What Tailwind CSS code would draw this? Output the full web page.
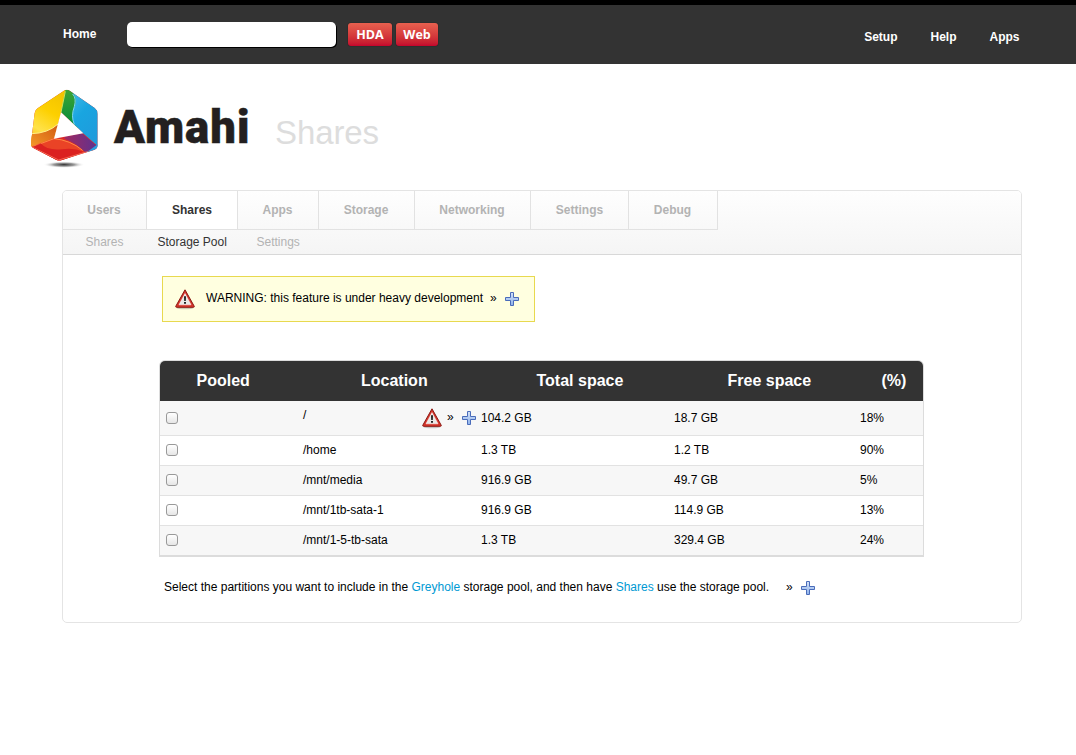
<!DOCTYPE html>
<html lang="en">
<head>
<meta charset="utf-8">
<title>Amahi - Shares</title>
<script src="https://cdn.jsdelivr.net/npm/@tailwindcss/browser@4"></script>
</head>
<body class="bg-white text-black text-[12px] leading-[16px] font-['Liberation_Sans',Arial,sans-serif]">

<svg class="absolute size-0">
  <defs>
    <linearGradient id="plusFill" x1="0" y1="0" x2="0" y2="1"><stop offset="0" stop-color="#d3e2f8"/><stop offset="1" stop-color="#8fb2ea"/></linearGradient>
    <symbol id="warn" viewBox="0 0 22 22">
      <ellipse cx="11" cy="20" rx="8.5" ry="1.3" fill="#000" opacity=".2"/>
      <path d="M11 1.8 L20.2 18.2 Q20.6 19.3 19.4 19.3 H2.6 Q1.4 19.3 1.8 18.2 Z" fill="#d5352b" stroke="#8a1a14" stroke-width="1" stroke-linejoin="round"/>
      <path d="M11 5.6 L17 16.8 H5 Z" fill="#e9e9e7" stroke="#fff" stroke-width=".5"/>
      <path d="M10 8.2 H12 L11.8 13 H10.2 Z M10 14 H12 V15.8 H10 Z" fill="#222"/>
    </symbol>
    <symbol id="plus" viewBox="0 0 14 14">
      <path d="M5.5 .5 H8.5 V5.5 H13.5 V8.5 H8.5 V13.5 H5.5 V8.5 H.5 V5.5 H5.5 Z" fill="url(#plusFill)" stroke="#4a6cba" stroke-width="1"/>
    </symbol>
  </defs>
</svg>

<header class="flex h-[64px] items-start border-t-[5px] border-black bg-[#333] pl-[63px] pr-[56.5px] font-bold text-white">
  <a class="mt-[21px] w-[64px]">Home</a>
  <div class="mt-[17px] h-[25px] w-[209px] rounded-[5px] bg-white shadow-[1px_1px_0_#000]"></div>
  <div class="mt-[18px] ml-[12px] flex gap-1 font-['Open_Sans',sans-serif] text-[12.5px] leading-[23px] text-shadow-[0_1px_1px_#0006]">
    <button class="h-[23px] w-[44px] rounded-[3px] bg-linear-to-b from-[#e8604f] to-[#c4032c] shadow-[0_0_1px_#000]">HDA</button>
    <button class="h-[23px] w-[42px] rounded-[3px] bg-linear-to-b from-[#e8604f] to-[#c4032c] shadow-[0_0_1px_#000]">Web</button>
  </div>
  <nav class="mt-[24px] ml-auto flex gap-[33px]"><a>Setup</a><a>Help</a><a>Apps</a></nav>
</header>

<div class="flex h-[126px] items-start pl-[28px] pt-[24px]">
  <svg class="h-[82px] w-[72px] shrink-0" viewBox="24 24 216 246">
    <defs>
      <linearGradient id="yel" x1=".6" y1="0" x2=".2" y2="1"><stop offset="0" stop-color="#f3c400"/><stop offset=".35" stop-color="#fdd000"/><stop offset=".7" stop-color="#ffe24a"/><stop offset="1" stop-color="#f9b000"/></linearGradient>
      <linearGradient id="ora" x1="0" y1="1" x2="1" y2="0"><stop offset="0" stop-color="#f59a2a"/><stop offset="1" stop-color="#d05a10"/></linearGradient>
      <linearGradient id="blu" x1="0" y1="0" x2=".6" y2="1"><stop offset="0" stop-color="#4dbfe8"/><stop offset=".5" stop-color="#19a5e0"/><stop offset="1" stop-color="#1f9bdc"/></linearGradient>
      <linearGradient id="grn" x1="0" y1="0" x2="0" y2="1"><stop offset="0" stop-color="#3fa535"/><stop offset="1" stop-color="#008a3a"/></linearGradient>
      <linearGradient id="pur" x1="0" y1="0" x2="1" y2="0"><stop offset="0" stop-color="#a02a62"/><stop offset="1" stop-color="#5b3291"/></linearGradient>
      <radialGradient id="shade"><stop offset="0" stop-color="#333"/><stop offset=".5" stop-color="#777" stop-opacity=".75"/><stop offset="1" stop-color="#fff" stop-opacity="0"/></radialGradient>
      <clipPath id="cube"><path d="M132 32 Q140 27 149 32 L224 84 Q233 91 233 102 V198 Q232 206 224 209 L124 241 Q116 243 108 239 L39 203 Q32 198 33 188 L44 99 Q45 90 53 85 Z"/></clipPath>
    </defs>
    <ellipse cx="132" cy="254" rx="62" ry="10" fill="url(#shade)"/>
    <g clip-path="url(#cube)">
      <rect x="24" y="24" width="216" height="246" fill="#da2a2a"/>
      <path d="M139 24 L24 90 V205 L102 176 L124 97 L140 34 Z" fill="url(#yel)"/>
      <path d="M34 161 Q84 160 114 132 L102 176 L30 202 Z" fill="url(#ora)"/>
      <path d="M34 161 Q84 160 114 132" fill="none" stroke="#ffee8a" stroke-width="3"/>
      <path d="M136 30 L123 97 L175 146 L180 60 L147 26 Z" fill="url(#grn)"/>
      <path d="M136 34 L123 97" stroke="#cde05a" stroke-width="3"/>
      <path d="M142 24 Q176 48 164 78 Q152 110 163 133 L189 160 L240 204 V80 Z" fill="url(#blu)"/>
      <path d="M163 133 Q152 108 163 80 Q170 55 158 42" fill="none" stroke="#7fd4f4" stroke-width="3"/>
      <path d="M30 201 L102 174 Q160 182 196 216 L116 246 Z" fill="#ea4326"/>
      <path d="M40 199 L102 176 Q150 180 188 211" fill="none" stroke="#ff8a45" stroke-width="3"/>
      <path d="M134 170 L186 160 L236 203 L196 217 Q170 190 134 176 Z" fill="url(#pur)"/>
      <path d="M62 190 Q80 212 125 208 Q160 202 192 215 L116 246 L30 205 Z" fill="#d4131e" opacity=".7"/>
      <path d="M36 201 L116 240 L230 207" fill="none" stroke="#f36a55" stroke-width="3"/>
      <path d="M198 218 L234 208 V192 Z" fill="#2b9ee0"/>
      <path d="M123 97 L190 160 L102 176 Z" fill="#fff"/>
    </g>
  </svg>
  <div class="ml-[14px] w-[161px] pt-[10px] font-['Roboto','Open_Sans',sans-serif] text-[45.5px] leading-[60px] font-black tracking-[1px] text-[#231f20] [-webkit-text-stroke:0.5px_#231f20]">Amahi</div>
  <h1 class="pt-[26px] text-[33px] leading-[38px] tracking-[-0.1px] text-[#ddd]">Shares</h1>
</div>

<main class="ml-[62px] h-[433px] w-[960px] rounded-[5px] border border-[#e4e4e4]">
  <div class="h-[64px] rounded-t-[4px] border-b border-[#d8d8d8] bg-linear-to-b from-[#fefefe] to-[#f5f5f5]">
    <nav class="flex h-[39px] w-[655px] border-r border-b border-[#e2e2e2] text-center leading-[38px] font-bold text-[#b3b3b3]">
      <a class="w-[83px] pr-px">Users</a>
      <a class="w-[92px] border-x border-[#e2e2e2] bg-white text-[#333]">Shares</a>
      <a class="w-[80px] pr-px">Apps</a>
      <a class="w-[96px] border-l border-[#e2e2e2] pr-px">Storage</a>
      <a class="w-[116px] border-l border-[#e2e2e2] pr-px">Networking</a>
      <a class="w-[98px] border-l border-[#e2e2e2]">Settings</a>
      <a class="w-[89px] border-l border-[#e2e2e2] pr-px">Debug</a>
    </nav>
    <nav class="flex pl-[22.5px] leading-[24px] text-[#b3b3b3]">
      <a class="w-[72px]">Shares</a><a class="w-[99px] text-[#333]">Storage Pool</a><a>Settings</a>
    </nav>
  </div>

  <div class="mt-[21px] ml-[99px] flex h-[46px] w-[373px] items-center border border-[#e8d94f] bg-[#ffffe0] pl-[11px]">
    <svg class="size-[22px]"><use href="#warn"/></svg>
    <span class="-mt-[2px] ml-[10px] w-[284px] whitespace-nowrap">WARNING: this feature is under heavy development</span>
    <span class="-mt-[2px] w-[15px]">»</span>
    <svg class="size-[14px]"><use href="#plus"/></svg>
  </div>

  <div class="mt-[38px] ml-[96px] w-[765px] rounded-t-[6px] border border-b-2 border-[#dcdcdc]">
    <div class="grid h-[40px] grid-cols-[143px_178px_193px_186px_63px] rounded-t-[5px] bg-[#333] text-[16px] leading-[39px] font-bold text-white">
      <div class="pl-[36.5px]">Pooled</div><div class="pl-[58px]">Location</div><div class="pl-[55.5px]">Total space</div><div class="pl-[53.5px]">Free space</div><div class="pl-[21.5px]">(%)</div>
    </div>
    <div class="grid h-[35px] grid-cols-[143px_178px_193px_186px_63px] items-center border-b border-[#e2e2e2] bg-[#f7f7f7]">
      <div class="pl-[6px]"><div class="size-[12px] rounded-[3px] border border-[#999] bg-linear-to-b from-white to-[#e6e6e6]"></div></div>
      <div class="flex items-center"><span class="-mt-[6px] w-[118px]">/</span><svg class="size-[22px]"><use href="#warn"/></svg><span class="-mt-[2px] ml-[4px] w-[15px]">»</span><svg class="size-[14px] shrink-0"><use href="#plus"/></svg></div>
      <div>104.2 GB</div><div>18.7 GB</div><div>18%</div>
    </div>
    <div class="grid h-[30px] grid-cols-[143px_178px_193px_186px_63px] border-b border-[#e2e2e2] bg-white leading-[28px]">
      <div class="pt-[8px] pl-[6px]"><div class="size-[12px] rounded-[3px] border border-[#999] bg-linear-to-b from-white to-[#e6e6e6]"></div></div>
      <div>/home</div><div>1.3 TB</div><div>1.2 TB</div><div>90%</div>
    </div>
    <div class="grid h-[30px] grid-cols-[143px_178px_193px_186px_63px] border-b border-[#e2e2e2] bg-[#f7f7f7] leading-[28px]">
      <div class="pt-[8px] pl-[6px]"><div class="size-[12px] rounded-[3px] border border-[#999] bg-linear-to-b from-white to-[#e6e6e6]"></div></div>
      <div>/mnt/media</div><div>916.9 GB</div><div>49.7 GB</div><div>5%</div>
    </div>
    <div class="grid h-[30px] grid-cols-[143px_178px_193px_186px_63px] border-b border-[#e2e2e2] bg-white leading-[28px]">
      <div class="pt-[8px] pl-[6px]"><div class="size-[12px] rounded-[3px] border border-[#999] bg-linear-to-b from-white to-[#e6e6e6]"></div></div>
      <div>/mnt/1tb-sata-1</div><div>916.9 GB</div><div>114.9 GB</div><div>13%</div>
    </div>
    <div class="grid h-[29px] grid-cols-[143px_178px_193px_186px_63px] bg-[#f7f7f7] leading-[28px]">
      <div class="pt-[8px] pl-[6px]"><div class="size-[12px] rounded-[3px] border border-[#999] bg-linear-to-b from-white to-[#e6e6e6]"></div></div>
      <div>/mnt/1-5-tb-sata</div><div>1.3 TB</div><div>329.4 GB</div><div>24%</div>
    </div>
  </div>

  <div class="mt-[22px] ml-[101px] flex items-center whitespace-nowrap">
    <p class="w-[622px]">Select the partitions you want to include in the <a class="text-[#0099d3]">Greyhole</a> storage pool, and then have <a class="text-[#0099d3]">Shares</a> use the storage pool.</p>
    <span class="w-[15px]">»</span>
    <svg class="mt-px size-[14px]"><use href="#plus"/></svg>
  </div>
</main>
</body>
</html>
